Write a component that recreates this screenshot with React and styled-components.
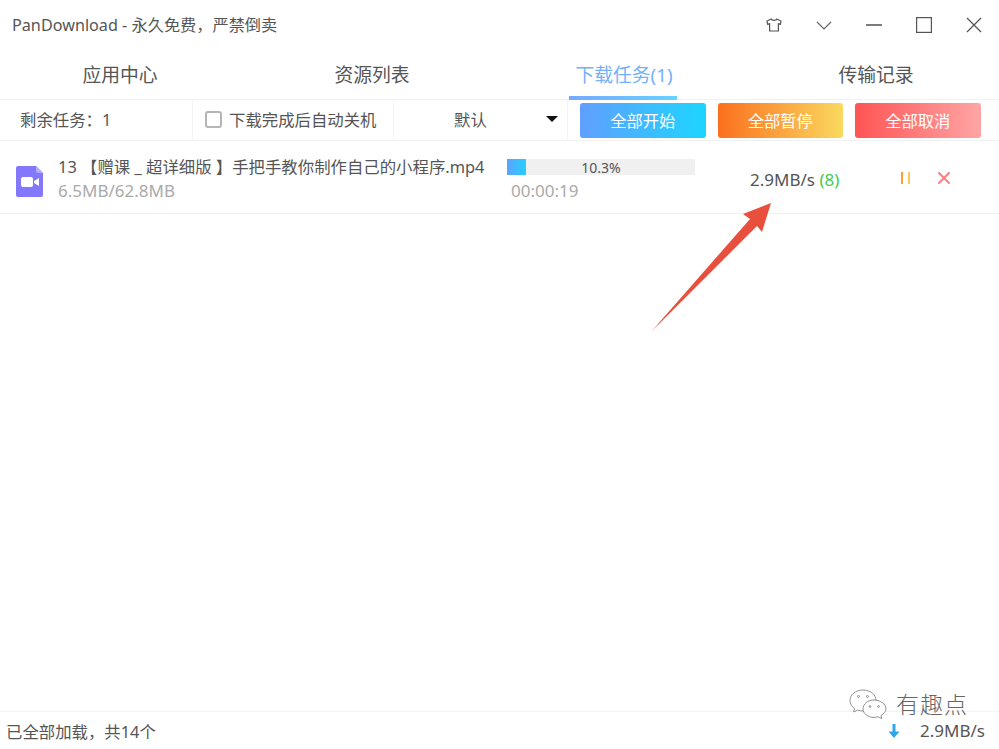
import React from "react";
import styled, { createGlobalStyle } from "styled-components";
import { X } from "lucide-react";

const GlobalStyle = createGlobalStyle`
  html, body {
    margin: 0;
    padding: 0;
    background: #fff;
    overflow: hidden;
  }
  * {
    box-sizing: border-box;
  }
`;

const Window = styled.div`
  position: relative;
  width: 999px;
  height: 749px;
  display: flex;
  flex-direction: column;
  overflow: hidden;
  background: #fff;
  color: #444;
  font-family: "Noto Sans", "Noto Sans CJK SC", sans-serif;
`;

const TitleBar = styled.div`
  height: 50px;
  flex: none;
  display: flex;
  align-items: center;
  justify-content: space-between;
  padding-left: 12px;
`;

const AppTitle = styled.div`
  font-size: 16.2px;
  color: #555;
  padding-bottom: 3px;
`;

const WindowButtons = styled.div`
  display: flex;
`;

const WindowButton = styled.div`
  width: 50px;
  height: 50px;
  display: flex;
  align-items: center;
  justify-content: center;
  color: #555;
`;

const Tabs = styled.div`
  height: 50px;
  flex: none;
  margin-left: -6px;
  display: grid;
  grid-template-columns: repeat(4, 252px);
  border-bottom: 1px solid #f1f1f1;
`;

const Tab = styled.div`
  position: relative;
  display: flex;
  align-items: center;
  justify-content: center;
  padding-bottom: 1px;
  font-size: 18.8px;
  color: ${(p) => (p.$active ? "#74b1fb" : "#555")};

  ${(p) =>
    p.$active &&
    `&::after {
      content: "";
      position: absolute;
      left: 71px;
      bottom: -1px;
      width: 108px;
      height: 4px;
      background: linear-gradient(90deg, #76a9ff, #66d2ff);
    }`}
`;

const Toolbar = styled.div`
  height: 41px;
  flex: none;
  display: flex;
  border-bottom: 1px solid #f1f1f1;
`;

const ToolCell = styled.div`
  width: ${(p) => p.$width}px;
  display: flex;
  align-items: center;
  border-right: 1px solid #f4f4f4;
  font-size: 16.4px;
  color: #555;
  padding: 0 0 2px ${(p) => p.$pad}px;
`;

const CheckBox = styled.span`
  width: 17px;
  height: 17px;
  margin-right: 7px;
  border: 2px solid #b5b5b5;
  border-radius: 3px;
`;

const Caret = styled.span`
  margin-left: 59px;
  width: 0;
  height: 0;
  border-left: 6px solid transparent;
  border-right: 6px solid transparent;
  border-top: 6px solid #111;
`;

const ActionGroup = styled.div`
  display: flex;
  gap: 12px;
  padding: 3px 0 0 12px;
`;

const ActionButton = styled.div`
  width: 125.5px;
  height: 35px;
  display: flex;
  align-items: center;
  justify-content: center;
  padding-bottom: 2px;
  border-radius: 3px;
  color: #fff;
  font-size: 16.3px;
  background: linear-gradient(90deg, ${(p) => p.$from}, ${(p) => p.$to});
`;

const TaskRow = styled.div`
  height: 73px;
  flex: none;
  display: flex;
  align-items: center;
  border-bottom: 1px solid #f1f1f1;
`;

const FileIcon = styled.div`
  width: 27px;
  margin: 9px 15px 0 16px;
  display: flex;
`;

const FileInfo = styled.div`
  width: 449px;
  padding-top: 2px;
`;

const FileName = styled.div`
  font-size: 16.4px;
  line-height: 24px;
  color: #555;
  white-space: nowrap;
`;

const MutedText = styled.div`
  font-size: 17px;
  line-height: 23px;
  color: #aaa;
  padding-left: ${(p) => p.$pad || 0}px;
`;

const ProgressCol = styled.div`
  width: 188px;
  padding-top: 7px;
`;

const ProgressTrack = styled.div`
  position: relative;
  height: 16px;
  margin-bottom: 4px;
  background: #f0f0f0;
`;

const ProgressFill = styled.div`
  height: 100%;
  background: linear-gradient(90deg, #5fa2ff, #22d0ff);
`;

const ProgressLabel = styled.span`
  position: absolute;
  inset: 0;
  display: flex;
  align-items: center;
  justify-content: center;
  font-size: 14px;
  color: #555;
`;

const Speed = styled.div`
  width: 185px;
  padding: 4px 0 0 55px;
  font-size: 17px;
  white-space: nowrap;
  color: #555;
`;

const Threads = styled.span`
  color: #3ecb4e;
`;

const RowActions = styled.div`
  display: flex;
  align-items: center;
  gap: 24px;
  padding: 2px 0 0 10px;
`;

const PauseIcon = styled.span`
  width: 9px;
  height: 12px;
  border-left: 2px solid #f9a13b;
  border-right: 2px solid #f9c95b;
  margin-left: 11px;
`;

const Spacer = styled.div`
  flex: 1;
`;

const StatusBar = styled.div`
  height: 38px;
  flex: none;
  display: flex;
  align-items: center;
  justify-content: space-between;
  padding: 0 14px 0 6px;
  border-top: 1px solid #f4f4f4;
  font-size: 16.4px;
  color: #555;
`;

const StatusSpeed = styled.div`
  display: flex;
  align-items: center;
  gap: 20px;
  font-size: 17px;
`;

const ArrowOverlay = styled.svg`
  position: absolute;
  left: 640px;
  top: 190px;
`;

const Watermark = styled.div`
  position: absolute;
  left: 849px;
  top: 689px;
  display: flex;
  align-items: center;
  gap: 9px;
  font-size: 23px;
  line-height: 28px;
  font-weight: 300;
  color: #666;
`;

const WatermarkText = styled.span`
  letter-spacing: 1px;
`;

function App() {
  return (
    <Window>
      <GlobalStyle />
      <TitleBar>
        <AppTitle>PanDownload - 永久免费，严禁倒卖</AppTitle>
        <WindowButtons>
          <WindowButton>
            <svg width="16" height="14" viewBox="0 0 16 14" fill="none" stroke="#555" strokeWidth="1.2">
              <path d="M5.2 1 L1 3 L1.6 6.2 L3.6 5.8 L3.6 13 L12.4 13 L12.4 5.8 L14.4 6.2 L15 3 L10.8 1 C10.2 2.8 5.8 2.8 5.2 1 Z" />
            </svg>
          </WindowButton>
          <WindowButton>
            <svg width="16" height="9" viewBox="0 0 16 9" fill="none" stroke="#666" strokeWidth="1.2">
              <path d="M1 1 L8 8 L15 1" />
            </svg>
          </WindowButton>
          <WindowButton>
            <svg width="16" height="4" viewBox="0 0 16 4" fill="none" stroke="#444" strokeWidth="1.4">
              <path d="M0 2 H16" />
            </svg>
          </WindowButton>
          <WindowButton>
            <svg width="16" height="16" viewBox="0 0 16 16" fill="none" stroke="#555" strokeWidth="1.2">
              <rect x="0.6" y="0.6" width="14.8" height="14.8" />
            </svg>
          </WindowButton>
          <WindowButton>
            <svg width="16" height="16" viewBox="0 0 16 16" fill="none" stroke="#555" strokeWidth="1.3">
              <path d="M1 1 L15 15 M15 1 L1 15" />
            </svg>
          </WindowButton>
        </WindowButtons>
      </TitleBar>

      <Tabs>
        <Tab>应用中心</Tab>
        <Tab>资源列表</Tab>
        <Tab $active>下载任务(1)</Tab>
        <Tab>传输记录</Tab>
      </Tabs>

      <Toolbar>
        <ToolCell $width={193} $pad={20}>剩余任务：1</ToolCell>
        <ToolCell $width={201} $pad={12}>
          <CheckBox />
          下载完成后自动关机
        </ToolCell>
        <ToolCell $width={174} $pad={60}>
          默认
          <Caret />
        </ToolCell>
        <ActionGroup>
          <ActionButton $from="#619fff" $to="#1dd5ff">全部开始</ActionButton>
          <ActionButton $from="#fb701e" $to="#fad95f">全部暂停</ActionButton>
          <ActionButton $from="#ff5454" $to="#ffa5a5">全部取消</ActionButton>
        </ActionGroup>
      </Toolbar>

      <TaskRow>
        <FileIcon>
          <svg width="27" height="31" viewBox="0 0 27 31">
            <path d="M2 0 H20 L27 7 V29 a2 2 0 0 1 -2 2 H2 a2 2 0 0 1 -2 -2 V2 a2 2 0 0 1 2 -2 Z" fill="#8378fb" />
            <path d="M20 0 L27 7 H22 a2 2 0 0 1 -2 -2 Z" fill="#b3acfd" />
            <rect x="5" y="11" width="12" height="10" rx="2" fill="#fff" />
            <path d="M18 15 L23 12 V20 L18 17 Z" fill="#fff" />
          </svg>
        </FileIcon>
        <FileInfo>
          <FileName>13 【赠课 _ 超详细版 】手把手教你制作自己的小程序.mp4</FileName>
          <MutedText>6.5MB/62.8MB</MutedText>
        </FileInfo>
        <ProgressCol>
          <ProgressTrack>
            <ProgressFill style={{ width: "10.3%" }} />
            <ProgressLabel>10.3%</ProgressLabel>
          </ProgressTrack>
          <MutedText $pad={4}>00:00:19</MutedText>
        </ProgressCol>
        <Speed>
          2.9MB/s <Threads>(8)</Threads>
        </Speed>
        <RowActions>
          <PauseIcon />
          <X size={20} color="#fb7f7f" strokeWidth={2.4} />
        </RowActions>
      </TaskRow>

      <Spacer />

      <StatusBar>
        <span>已全部加载，共14个</span>
        <StatusSpeed>
          <svg width="12" height="14" viewBox="0 0 12 14">
            <path d="M4.5 0 H7.5 V7.5 H11.5 L6 14 L0.5 7.5 H4.5 Z" fill="#2ea7ea" />
          </svg>
          2.9MB/s
        </StatusSpeed>
      </StatusBar>

      <ArrowOverlay width="140" height="150" viewBox="0 0 140 150">
        <defs>
          <linearGradient id="arrowFade" x1="0" y1="1" x2="1" y2="0">
            <stop offset="0" stopColor="#f7c4bc" />
            <stop offset="0.08" stopColor="#e94f3d" />
          </linearGradient>
        </defs>
        <path d="M131 13 L122 42 L117 36 L10 143 L110 29 L103 24 Z" fill="url(#arrowFade)" />
      </ArrowOverlay>

      <Watermark>
        <svg width="38" height="30" viewBox="0 0 38 30" fill="#fff" stroke="#777" strokeWidth="0.8">
          <path d="M14 1 C6.5 1 1 5.8 1 11.5 C1 15 3 17.8 5.6 19.6 L4.6 23 L8.6 21 C10.5 21.6 12.4 22 14 22 C21.5 22 27 17 27 11.5 C27 5.8 21.5 1 14 1 Z" />
          <path d="M25 11 C18.8 11 14 15 14 19.8 C14 24.6 18.8 28.4 25 28.4 C26.4 28.4 27.8 28.2 29 27.8 L32.8 29.6 L32 26.4 C35 24.6 37 22.4 37 19.8 C37 15 31.2 11 25 11 Z" />
          <circle cx="9.5" cy="7.5" r="1" />
          <circle cx="18.5" cy="7.5" r="1" />
          <circle cx="21" cy="17.5" r="0.9" />
          <circle cx="29.5" cy="17.5" r="0.9" />
        </svg>
        <WatermarkText>有趣点</WatermarkText>
      </Watermark>
    </Window>
  );
}

export default App;
